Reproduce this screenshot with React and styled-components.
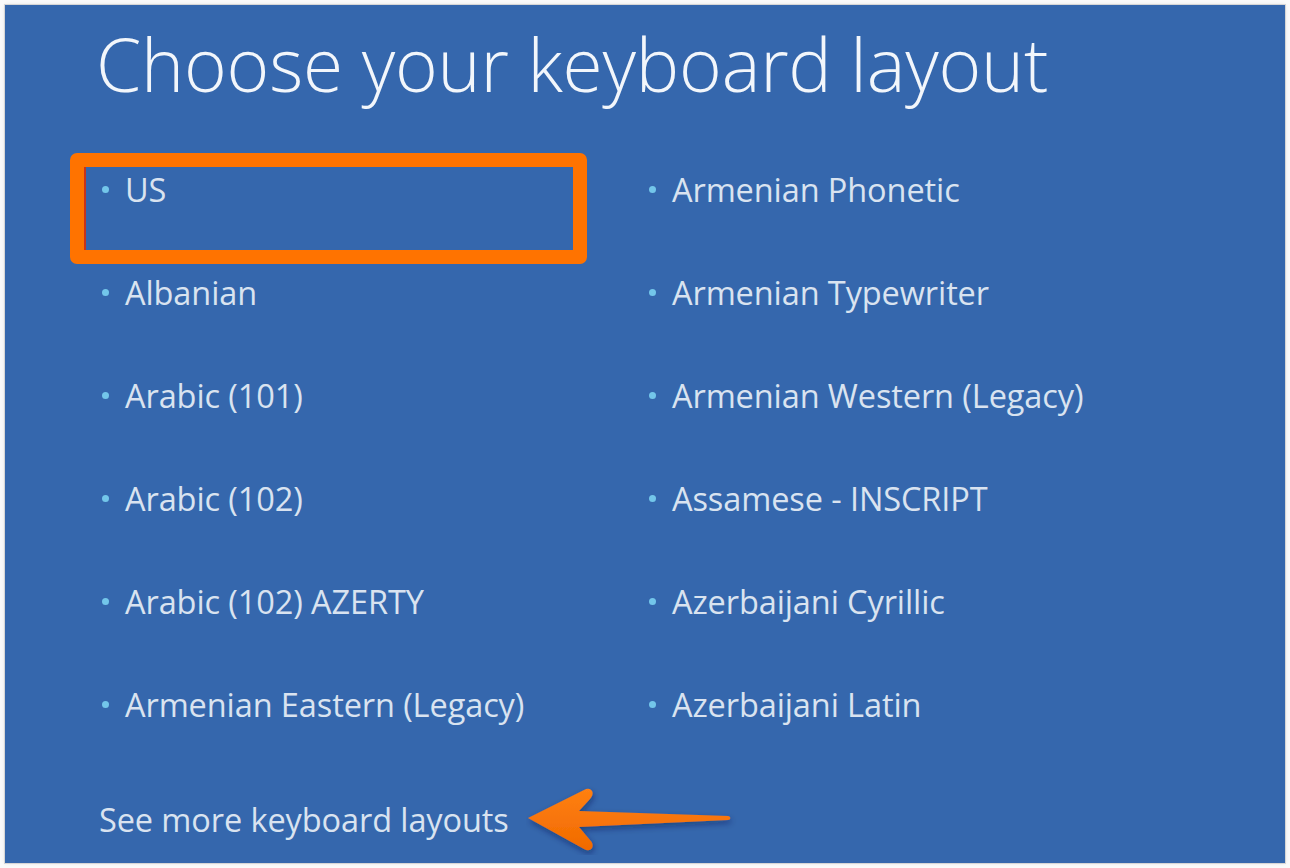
import React from 'react'
import styled, { createGlobalStyle } from 'styled-components'

const left = ['US', 'Albanian', 'Arabic (101)', 'Arabic (102)', 'Arabic (102) AZERTY', 'Armenian Eastern (Legacy)']
const right = ['Armenian Phonetic', 'Armenian Typewriter', 'Armenian Western (Legacy)', 'Assamese - INSCRIPT', 'Azerbaijani Cyrillic', 'Azerbaijani Latin']

function App() {
    return (
        <>
            <Global />
            <Frame>
                <Panel>
                    <Title>Choose your keyboard layout</Title>
                    <Grid>
                        {left.map((name, i) => (
                            <React.Fragment key={name}>
                                <Item>
                                    <Bullet />
                                    {name}
                                    {i === 0 && <Highlight />}
                                </Item>
                                <Item>
                                    <Bullet />
                                    {right[i]}
                                </Item>
                            </React.Fragment>
                        ))}
                    </Grid>
                    <Footer>
                        <MoreLink>See more keyboard layouts</MoreLink>
                        <Arrow />
                    </Footer>
                </Panel>
            </Frame>
        </>
    )
}

export default App

function Arrow() {
    return (
        <ArrowSvg width="214" height="70" viewBox="0 0 214 70">
            <defs>
                <filter id="sh" x="-20%" y="-40%" width="140%" height="180%">
                    <feDropShadow dx="1" dy="3" stdDeviation="3" floodColor="#0a1f45" floodOpacity="0.45" />
                </filter>
                <linearGradient id="og" x1="0" y1="0" x2="0" y2="1">
                    <stop offset="0" stopColor="#ff8012" />
                    <stop offset="1" stopColor="#f06a00" />
                </linearGradient>
            </defs>
            <path
                filter="url(#sh)"
                fill="url(#og)"
                d="M2 33 L58 5 C65 1 70 8 64 14 L53 26 L202 31 C205 31 205 35 202 35 L53 42 L64 55 C70 61 65 68 58 64 Z"
            />
        </ArrowSvg>
    )
}

const Global = createGlobalStyle`
    html, body {
        margin: 0;
        background: #ffffff;
    }
    body {
        font-family: "Open Sans", "Noto Sans", sans-serif;
    }
`

const Frame = styled.div`
    width: 1290px;
    height: 868px;
    padding: 5px;
    box-sizing: border-box;
    background: #fafafa;
`

const Panel = styled.div`
    height: 858px;
    box-sizing: border-box;
    background: #3567ad;
    box-shadow: 0 0 0 1px #d6d6d6, 0 0 4px rgba(0, 0, 0, 0.12);
    padding: 9px 0 0 91px;
    display: flex;
    flex-direction: column;
`

const Title = styled.h1`
    margin: 0;
    font-weight: 300;
    font-size: 73px;
    line-height: 99px;
    color: #f2f6fb;
    letter-spacing: -0.2px;
`

const Grid = styled.div`
    display: grid;
    grid-template-columns: 547px 547px;
    grid-auto-rows: 103px;
    margin-top: 55px;
    padding-left: 6px;
`

const Item = styled.div`
    position: relative;
    display: flex;
    align-items: flex-start;
    font-size: 32.5px;
    line-height: 44px;
    color: #d9e3f0;
    letter-spacing: -0.1px;
`

const Bullet = styled.span`
    width: 7px;
    height: 7px;
    border-radius: 50%;
    background: #73c6ea;
    margin: 18px 16px 0 0;
    flex: none;
`

const Highlight = styled.div`
    position: absolute;
    left: -32px;
    top: -15px;
    width: 517px;
    height: 111px;
    box-sizing: border-box;
    border: 14px solid #ff7300;
    border-radius: 7px;
    box-shadow: inset 3px 0 0 -1px #c8341a;
    pointer-events: none;
`

const Footer = styled.div`
    display: flex;
    align-items: center;
    margin-top: 12px;
    padding-left: 3px;
`

const MoreLink = styled.span`
    font-size: 32.5px;
    line-height: 44px;
    color: #d9e3f0;
    letter-spacing: -0.1px;
`

const ArrowSvg = styled.svg`
    margin: -13px 0 -13px 17px;
    flex: none;
`
